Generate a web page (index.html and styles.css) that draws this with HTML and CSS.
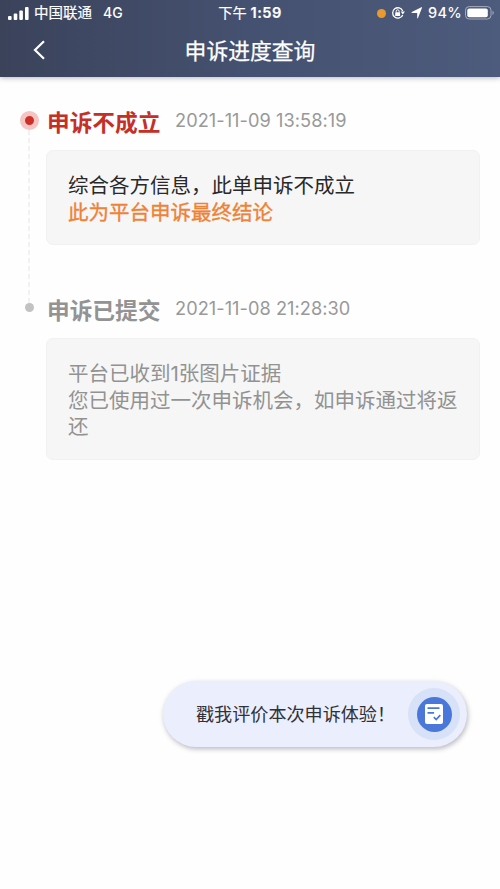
FILE: index.html
```html
<!DOCTYPE html>
<html lang="zh-CN">
<head>
<meta charset="utf-8">
<title>申诉进度查询</title>
<link rel="stylesheet" href="styles.css">
</head>
<body>
<header class="header">
  <div class="status">
    <div class="status-left">
      <svg class="signal" width="21" height="13" viewBox="0 0 21 13" fill="#fff"><rect x="0" y="9" width="3.6" height="4" rx="1"/><rect x="5.7" y="6.5" width="3.6" height="6.5" rx="1"/><rect x="11.3" y="3.5" width="3.6" height="9.5" rx="1"/><rect x="17" y="0" width="3.6" height="13" rx="1"/></svg>
      <span class="carrier">中国联通</span>
      <span class="network">4G</span>
    </div>
    <div class="clock">下午 <b>1:59</b></div>
    <div class="status-right">
      <i class="mic"></i>
      <svg class="lock" width="14" height="14" viewBox="0 0 14 14"><path d="M11.7 8.9A5.2 5.2 0 1 1 11.7 5" fill="none" stroke="#fff" stroke-width="1.3"/><path d="M9.7 5.6h4.2l-2.1 3z" fill="#fff"/><rect x="4.2" y="6.3" width="4.9" height="3.7" rx=".6" fill="#fff"/><path d="M5.2 6.5V5.2a1.45 1.45 0 0 1 2.9 0v1.3" fill="none" stroke="#fff"/></svg>
      <svg class="arrow" width="12" height="12" viewBox="0 0 12 12"><path d="M11.1.5 7 11.1c-.2.5-.8.4-.8-.1V5.9H1C.4 5.9.3 5.2.8 5L10.4.3c.5-.2.8-.1.7.2z" fill="#fff"/></svg>
      <span class="percent">94%</span>
      <svg class="battery" width="30" height="14" viewBox="0 0 30 14"><rect x=".5" y=".6" width="25.5" height="12.4" rx="3.6" fill="none" stroke="#a4abbc"/><rect x="2.3" y="2.4" width="20.5" height="8.8" rx="2" fill="#fff"/><path d="M27.5 4.8c1.7.6 1.7 3.6 0 4.2z" fill="#a4abbc"/></svg>
    </div>
  </div>
  <nav class="nav">
    <svg class="back" width="13" height="20" viewBox="0 0 13 20"><path d="M11 1.3 2 10l9 8.7" fill="none" stroke="#fff" stroke-width="2.2"/></svg>
    <h1 class="title">申诉进度查询</h1>
  </nav>
</header>
<main class="timeline">
  <section class="step step-failed">
    <div class="rail"><i class="dot"></i><svg class="line" width="2" height="173"><path d="M1 0v173" stroke="#e9e7e8" stroke-width="1.2" stroke-dasharray="5 3"/></svg></div>
    <div class="content">
      <div class="heading"><h2 class="state">申诉不成立</h2><time class="time">2021-11-09 13:58:19</time></div>
      <div class="card"><p>综合各方信息，此单申诉不成立</p><p class="final">此为平台申诉最终结论</p></div>
    </div>
  </section>
  <section class="step step-submitted">
    <div class="rail"><i class="dot"></i></div>
    <div class="content">
      <div class="heading"><h2 class="state">申诉已提交</h2><time class="time">2021-11-08 21:28:30</time></div>
      <div class="card"><p>平台已收到1张图片证据</p><p>您已使用过一次申诉机会，如申诉通过将返还</p></div>
    </div>
  </section>
</main>
<button class="feedback">
  <span class="feedback-text">戳我评价本次申诉体验！</span>
  <span class="halo"><span class="disc"><svg width="18" height="20" viewBox="0 0 18 20"><rect width="18" height="20" rx="2" fill="#fff"/><path d="M2.5 4.1h12M2.5 8.9h6.6" stroke="#4a78da" stroke-width="1.7"/><path d="m8.8 13.2 2.4 2.4 4.1-4.5" fill="none" stroke="#4a78da" stroke-width="1.7"/></svg></span></span>
</button>
</body>
</html>
```
FILE: styles.css
```css
* { box-sizing: border-box; }

body {
  margin: 0;
  height: 889px;
  overflow: hidden;
  display: flex;
  flex-direction: column;
  background: #fefefe;
  font-family: Inter, "Noto Sans CJK SC", sans-serif;
}

h1, h2, p { margin: 0; }

.header {
  height: 77px;
  color: #fff;
  background: linear-gradient(90deg, #3b435b, #455170 50%, #4d5b7c);
  box-shadow: 0 1px 5px rgba(70, 78, 100, .4);
}

.status {
  height: 26px;
  display: grid;
  grid-template-columns: 1fr auto 1fr;
  align-items: center;
  font-size: 14.5px;
  line-height: 26px;
}

.status-left, .status-right { display: flex; align-items: center; }
.status-left { padding-left: 8px; }
.status-right { justify-content: flex-end; padding-right: 5px; }
.carrier { margin-left: 5px; -webkit-text-stroke: .2px #fff; }
.network { margin-left: 11px; font-size: 14px; font-weight: 500; }
.clock { font-size: 14.2px; -webkit-text-stroke: .2px #fff; }
.clock b { font-size: 14.6px; font-weight: 600; letter-spacing: .45px; }
.mic { width: 9px; height: 9px; border-radius: 50%; background: #e8992f; }
.lock { margin-left: 5px; }
.arrow { margin-left: 6px; }
.percent { margin-left: 5px; font-size: 14.5px; font-weight: 500; letter-spacing: .3px; }
.battery { margin-left: 3px; }

.nav {
  height: 51px;
  display: grid;
  grid-template-columns: 1fr auto 1fr;
  padding-left: 33px;
  padding-right: 33px;
}
.back { margin-top: 14px; }
.title { font-size: 21.8px; line-height: 50px; font-weight: 400; -webkit-text-stroke: .25px #fff; }

.timeline { padding: 29px 20px 0 18px; }
.step { display: grid; grid-template-columns: 22px 1fr; column-gap: 6px; }
.step-failed { height: 188px; }

.rail { display: flex; flex-direction: column; align-items: center; }
.dot { border-radius: 50%; flex: none; }
.step-failed .dot { width: 19px; height: 19px; margin-top: 5px; background: #cc3028; border: 5px solid #f5c4c3; }
.step-submitted .dot { width: 9px; height: 9px; margin-top: 9px; background: #c2c2c2; }
.line { flex: none; }

.heading { display: flex; height: 32px; padding-left: 1px; align-items: flex-start; }
.state { width: 128px; font-size: 22.7px; line-height: 33px; font-weight: 700; white-space: nowrap; }
.time { font-size: 18.2px; line-height: 29px; font-weight: 400; letter-spacing: .05px; color: #999; white-space: nowrap; }
.step-failed .state { color: #c62f27; }
.step-submitted .state { color: #939393; }

.card {
  margin-top: 12px;
  padding: 22px 14px 16px 21px;
  border: 1px solid #f1f1f1;
  border-radius: 7px;
  background: #f6f6f6;
  font-size: 20.5px;
  line-height: 26.7px;
  color: #29292b;
}
.step-failed .card { height: 95px; }
.step-submitted .card { height: 122px; color: #929292; }
.card .final { color: #ee8236; -webkit-text-stroke: .35px #ee8236; }

.feedback {
  width: 304px;
  height: 66px;
  margin: auto 33px 142px auto;
  padding: 0 7px 0 33px;
  display: flex;
  align-items: center;
  justify-content: space-between;
  border: 0;
  border-radius: 33px;
  background: #ebeefd;
  box-shadow: 1px 2px 5px rgba(80, 80, 100, .4);
  font: 18.1px/26px Inter, "Noto Sans CJK SC", sans-serif;
  color: #303139;
}
.feedback-text { width: 199px; white-space: nowrap; text-align: left; }
.halo, .disc { display: flex; align-items: center; justify-content: center; border-radius: 50%; }
.halo { flex: none; width: 52px; height: 52px; background: #d7e1f8; }
.disc { width: 35px; height: 35px; background: #4a78da; }
```
